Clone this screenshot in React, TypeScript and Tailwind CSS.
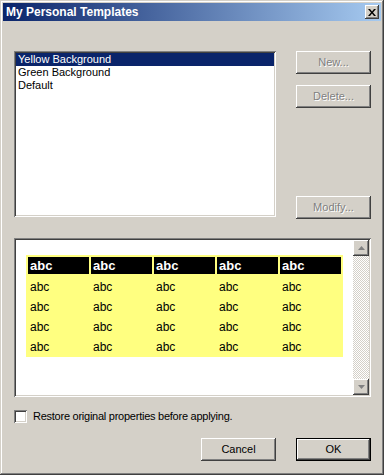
import React from "react";

const raised =
  "bg-[#d4d0c8] shadow-[inset_-1px_-1px_#404040,inset_1px_1px_#ffffff,inset_-2px_-2px_#808080,inset_2px_2px_#d4d0c8]";
const sunken =
  "shadow-[inset_1px_1px_#808080,inset_-1px_-1px_#ffffff,inset_2px_2px_#404040,inset_-2px_-2px_#d4d0c8]";

const templates = ["Yellow Background", "Green Background", "Default"];

const Button = ({
  label,
  disabled,
  isDefault,
}: {
  label: string;
  disabled?: boolean;
  isDefault?: boolean;
}) => {
  if (isDefault) {
    return (
      <div className="w-[75px] h-[23px] border border-black">
        <div className={`${raised} w-full h-full flex items-center justify-center text-black`}>
          {label}
        </div>
      </div>
    );
  }
  return (
    <div
      className={`${raised} w-[75px] h-[23px] flex items-center justify-center ${
        disabled ? "text-[#808080] [text-shadow:1px_1px_#ffffff]" : "text-black"
      }`}
    >
      {label}
    </div>
  );
};

const ScrollArrow = ({ up }: { up?: boolean }) => (
  <div className={`${raised} w-[16px] h-[16px] flex items-center justify-center`}>
    <svg width="7" height="4" viewBox="0 0 7 4">
      {up ? (
        <polygon points="3.5,0 7,4 0,4" fill="#808080" />
      ) : (
        <polygon points="0,0 7,0 3.5,4" fill="#808080" />
      )}
    </svg>
  </div>
);

const PreviewTable = () => {
  const cols = [0, 1, 2, 3, 4];
  const rows = [0, 1, 2, 3];
  return (
    <div className="w-[317px] bg-[#ffff80] pt-[2px] px-[2px] flex flex-col">
      <div className="grid grid-cols-5 gap-x-[2px] h-[17px]">
        {cols.map((c) => (
          <div key={c} className="bg-black text-white font-bold text-[13px] leading-[17px] pl-[2px]">
            abc
          </div>
        ))}
      </div>
      <div className="mt-[3px] flex flex-col">
        {rows.map((r) => (
          <div key={r} className="grid grid-cols-5 gap-x-[2px] h-[20px]">
            {cols.map((c) => (
              <div key={c} className="text-black text-[12px] leading-[20px] pl-[2px]">
                abc
              </div>
            ))}
          </div>
        ))}
      </div>
    </div>
  );
};

export default function App() {
  return (
    <div
      className="w-[384px] h-[475px] bg-[#d4d0c8] p-[3px] flex flex-col text-[11px] text-black shadow-[inset_-1px_-1px_#404040,inset_1px_1px_#d4d0c8,inset_-2px_-2px_#808080,inset_2px_2px_#ffffff]"
      style={{ fontFamily: '"Liberation Sans", Arial, sans-serif' }}
    >
      {/* title bar */}
      <div className="h-[18px] flex items-center justify-between pl-[3px] pr-[2px] bg-[linear-gradient(to_right,#0a246a,#a6caf0)]">
        <span className="text-white font-bold text-[12px]">My Personal Templates</span>
        <div className={`${raised} w-[14px] h-[14px] flex items-center justify-center`}>
          <svg width="8" height="7" viewBox="0 0 8 7">
            <path d="M0 0h2l2 2.5L6 0h2L5 3.5 8 7H6L4 4.5 2 7H0l3-3.5z" fill="#000" />
          </svg>
        </div>
      </div>

      {/* body */}
      <div className="flex flex-col pl-[11px] pr-[10px] pt-[30px]">
        <div className="flex gap-[20px]">
          <div className={`${sunken} bg-white w-[262px] h-[166px] p-[2px]`}>
            {templates.map((t, i) => (
              <div
                key={t}
                className={`h-[13px] leading-[13px] pl-[2px] ${
                  i === 0 ? "bg-[#0a246a] text-white" : "text-black"
                }`}
              >
                {t}
              </div>
            ))}
          </div>
          <div className="flex flex-col">
            <Button label="New..." disabled />
            <div className="mt-[11px]">
              <Button label="Delete..." disabled />
            </div>
            <div className="mt-[88px]">
              <Button label="Modify..." disabled />
            </div>
          </div>
        </div>

        {/* preview */}
        <div className={`${sunken} bg-white mt-[19px] w-[357px] h-[159px] p-[2px] flex`}>
          <div className="flex-1 pl-[10px] pt-[15px]">
            <PreviewTable />
          </div>
          <div className="w-[16px] flex flex-col">
            <ScrollArrow up />
            <div className="flex-1 bg-[repeating-conic-gradient(#d4d0c8_0%_25%,#ffffff_0%_50%)] [background-size:2px_2px]" />
            <ScrollArrow />
          </div>
        </div>

        {/* checkbox */}
        <div className="mt-[13px] flex items-center gap-[6px] h-[13px]">
          <div className={`${sunken} bg-white w-[13px] h-[13px]`} />
          <span className="leading-[13px] tracking-[-0.25px]">
            Restore original properties before applying.
          </span>
        </div>

        {/* buttons */}
        <div className="mt-[15px] flex justify-end gap-[20px]">
          <Button label="Cancel" />
          <Button label="OK" isDefault />
        </div>
      </div>
    </div>
  );
}
